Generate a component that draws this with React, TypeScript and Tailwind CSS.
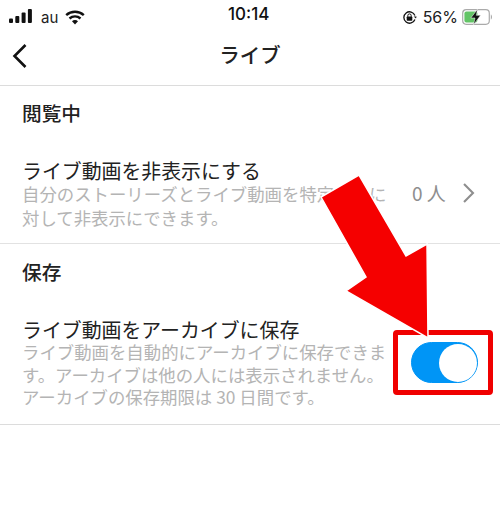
import React from "react";

function StatusBar() {
  return (
    <div className="relative flex h-[31px] items-center justify-between pl-[9px] pr-[7px] pt-[3px]">
      <div className="flex items-center gap-[9px]">
        <svg width="23" height="14" viewBox="0 0 23 14" className="mt-[-2px]">
          <rect x="0" y="9.5" width="4" height="4.5" rx="1" fill="#111" />
          <rect x="6.3" y="7" width="4" height="7" rx="1" fill="#111" />
          <rect x="12.6" y="3.5" width="4" height="10.5" rx="1" fill="#111" />
          <rect x="18.9" y="0" width="4" height="14" rx="1" fill="#111" />
        </svg>
        <div className="flex items-center gap-[7px]">
          <span className="font-['Inter',sans-serif] text-[15px] leading-none text-[#222]">au</span>
          <svg width="20" height="15" viewBox="0 0 20 15">
            <path d="M1.2 5.2 A13 13 0 0 1 18.8 5.2" fill="none" stroke="#111" strokeWidth="2.4" />
            <path d="M4.5 8.5 A8.2 8.2 0 0 1 15.5 8.5" fill="none" stroke="#111" strokeWidth="2.4" />
            <path d="M7 11.3 A4.2 4.2 0 0 1 13 11.3 L10 14.6 Z" fill="#111" />
          </svg>
        </div>
      </div>
      <span className="absolute left-[228px] top-[2px] font-['Inter',sans-serif] text-[17px] font-medium leading-[24px] text-[#111]">10:14</span>
      <div className="flex items-center gap-[6px]">
        <svg width="15" height="15" viewBox="0 0 15 15">
          <path d="M12.9 5.5 A5.7 5.7 0 1 0 12.9 9.5" fill="none" stroke="#111" strokeWidth="1.3" />
          <path d="M11.6 6.4 L14.6 6.4 L14 8.6 Z" fill="#111" />
          <rect x="4.7" y="6.6" width="5.6" height="4.2" rx="0.7" fill="#111" />
          <path d="M5.8 6.8 V5.6 A1.7 1.7 0 0 1 9.2 5.6 V6.8" fill="none" stroke="#111" strokeWidth="1" />
        </svg>
        <span className="font-['Inter',sans-serif] text-[16px] leading-none text-[#222]">56%</span>
        <svg width="31" height="16" viewBox="0 0 31 16" className="ml-[-2px]">
          <rect x="0.7" y="0.7" width="26.6" height="14.6" rx="3.5" fill="none" stroke="#aaa" strokeWidth="1.2" />
          <rect x="2.4" y="2.4" width="13" height="11.2" rx="2" fill="#63c466" />
          <path d="M28.8 5.5 C30.4 6 30.4 10 28.8 10.5 Z" fill="#aaa" />
          <path d="M15.5 0.2 L8.8 9 L13 9 L11.5 15.8 L18.6 6.3 L14.3 6.3 Z" fill="#111" stroke="#fff" strokeWidth="0.5" />
        </svg>
      </div>
    </div>
  );
}

function Chevron({ right, className }: { right?: boolean; className?: string }) {
  return (
    <svg viewBox="0 0 16 26" className={className} fill="none" stroke="currentColor" strokeWidth="2.6">
      <path d={right ? "M2.5 2 L13.5 13 L2.5 24" : "M13.5 2 L2.5 13 L13.5 24"} />
    </svg>
  );
}

export default function App() {
  return (
    <div className="relative h-[520px] w-[500px] overflow-hidden bg-white font-['Noto_Sans_CJK_JP','Noto_Sans',sans-serif] text-[#262626]">
      <StatusBar />
      <header className="relative flex h-[55px] items-center justify-center border-b border-[#dcdcdc] pb-[7px]">
        <Chevron className="absolute left-[12px] top-[12px] h-[26px] w-[16px] text-[#111]" />
        <h1 className="text-[20.5px] font-medium leading-none text-[#222]">ライブ</h1>
      </header>

      <section className="flex h-[158px] flex-col border-b border-[#e2e2e2] pl-[22px]">
        <h2 className="mt-[14px] text-[19.7px] font-medium leading-[26px] text-[#222]">閲覧中</h2>
        <div className="mt-[33px] flex items-start">
          <div className="w-[365px]">
            <div className="text-[19.9px] leading-[24px] text-[#222]">ライブ動画を非表示にする</div>
            <div className="mt-[-1px] text-[17.4px] leading-[23.5px] text-[#b4b4b4]">
              自分のストーリーズとライブ動画を特定の人に<br />対して非表示にできます。
            </div>
          </div>
          <div className="ml-[25px] mt-[21px] flex items-center text-[#8e8e8e]">
            <span className="text-[19px] leading-[26px]">0 人</span>
            <Chevron right className="ml-[16px] h-[22px] w-[13px]" />
          </div>
        </div>
      </section>

      <section className="flex h-[181px] flex-col border-b border-[#dcdcdc] pl-[22px]">
        <h2 className="mt-[15px] text-[19.7px] font-medium leading-[26px] text-[#222]">保存</h2>
        <div className="mt-[33px] flex items-start">
          <div className="w-[368px]">
            <div className="text-[19.9px] leading-[24px] text-[#222]">ライブ動画をアーカイブに保存</div>
            <div className="mt-[-1px] whitespace-nowrap text-[17.4px] leading-[22.5px] text-[#b4b4b4]">
              ライブ動画を自動的にアーカイブに保存できま<br />す。アーカイブは他の人には表示されません。<br />アーカイブの保存期限は 30 日間です。
            </div>
          </div>
          <div className="ml-[21px] mt-[24px] flex h-[41px] w-[67px] items-center justify-end rounded-full border-[1.5px] border-[#0095f6] bg-[#0095f6]">
            <div className="h-[38px] w-[38px] rounded-full bg-white" />
          </div>
        </div>
      </section>

      <div className="absolute left-[393px] top-[330px] h-[65px] w-[100px] rounded-[4px] border-[5px] border-[#f00000]" />
      <svg width="500" height="520" viewBox="0 0 500 520" className="absolute left-0 top-0">
        <polygon
          points="321,197 359,175 406,256 427,244 428,338 346,291 366,277"
          fill="#f50000"
          stroke="#fff"
          strokeWidth="1.5"
        />
      </svg>
    </div>
  );
}
